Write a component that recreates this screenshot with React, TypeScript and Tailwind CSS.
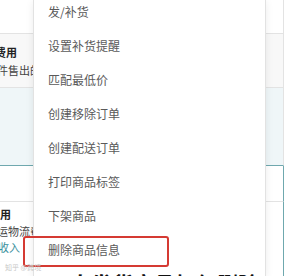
import React from 'react';

const menuItems = [
  '发/补货',
  '设置补货提醒',
  '匹配最低价',
  '创建移除订单',
  '创建配送订单',
  '打印商品标签',
  '下架商品',
  '删除商品信息',
];

const App: React.FC = () => {
  return (
    <div className="relative w-[295px] h-[276px] overflow-hidden bg-white font-['Noto_Sans_CJK_SC',sans-serif]">
      {/* table behind the menu */}
      <div className="flex flex-col w-[284px] h-full">
        <div className="h-[34px] border-b border-r border-[#e3e3e3] bg-white" />
        <div className="h-[54px] border-b border-r border-[#e3e3e3] bg-[#f8f8f8] pt-[9px]">
          <div className="w-[33px] overflow-hidden text-[11px] leading-[18px] whitespace-nowrap">
            <div className="ml-[-5px] font-bold text-[#222]">费用</div>
            <div className="ml-[-3px] text-[#444]">件售出的</div>
          </div>
        </div>
        <div className="h-[78px] border-b border-r border-b-[#6fa8ae] border-r-[#e3e3e3] bg-[#eff6f8]" />
        <div className="h-[36px] border-b border-r border-b-[#e3e3e3] border-r-[#6fa8ae] bg-white" />
        <div className="flex-1 border-r border-[#6fa8ae] bg-white pt-[4px]">
          <div className="w-[33px] overflow-hidden text-[11px] leading-[16.5px] whitespace-nowrap">
            <div className="font-bold text-[#222]">用</div>
            <div className="ml-[-3px] text-[#444]">运物流费</div>
            <div className="ml-[-2px] text-[#3a8f9c]">收入</div>
          </div>
        </div>
      </div>

      {/* dropdown menu */}
      <div className="absolute left-[33px] top-0 bottom-0 w-[233px] bg-white border-l border-r border-[#e2e2e2] shadow-[0_2px_8px_rgba(0,0,0,0.08)]">
        <div className="mt-[-5px] flex flex-col">
          {menuItems.map((item) => (
            <div key={item} className="h-[34px] flex items-center pl-[14px] text-[12px] text-[#5a5a5a]">
              {item}
            </div>
          ))}
        </div>
      </div>

      {/* highlight box */}
      <div className="absolute left-[23px] top-[236px] w-[146px] h-[31px] border-2 border-[#d53a33] rounded-[3px]" />

      {/* watermark */}
      <div className="absolute left-[5px] top-[262px] text-[7px] text-[#c8c8c8] whitespace-nowrap">知乎 @跨境</div>

      {/* subtitle peeking at the bottom */}
      <div className="absolute left-[70px] top-[273px] text-[21px] leading-none font-bold text-[#111] whitespace-nowrap">
        自发货商品如何删除
      </div>
    </div>
  );
};

export default App;
